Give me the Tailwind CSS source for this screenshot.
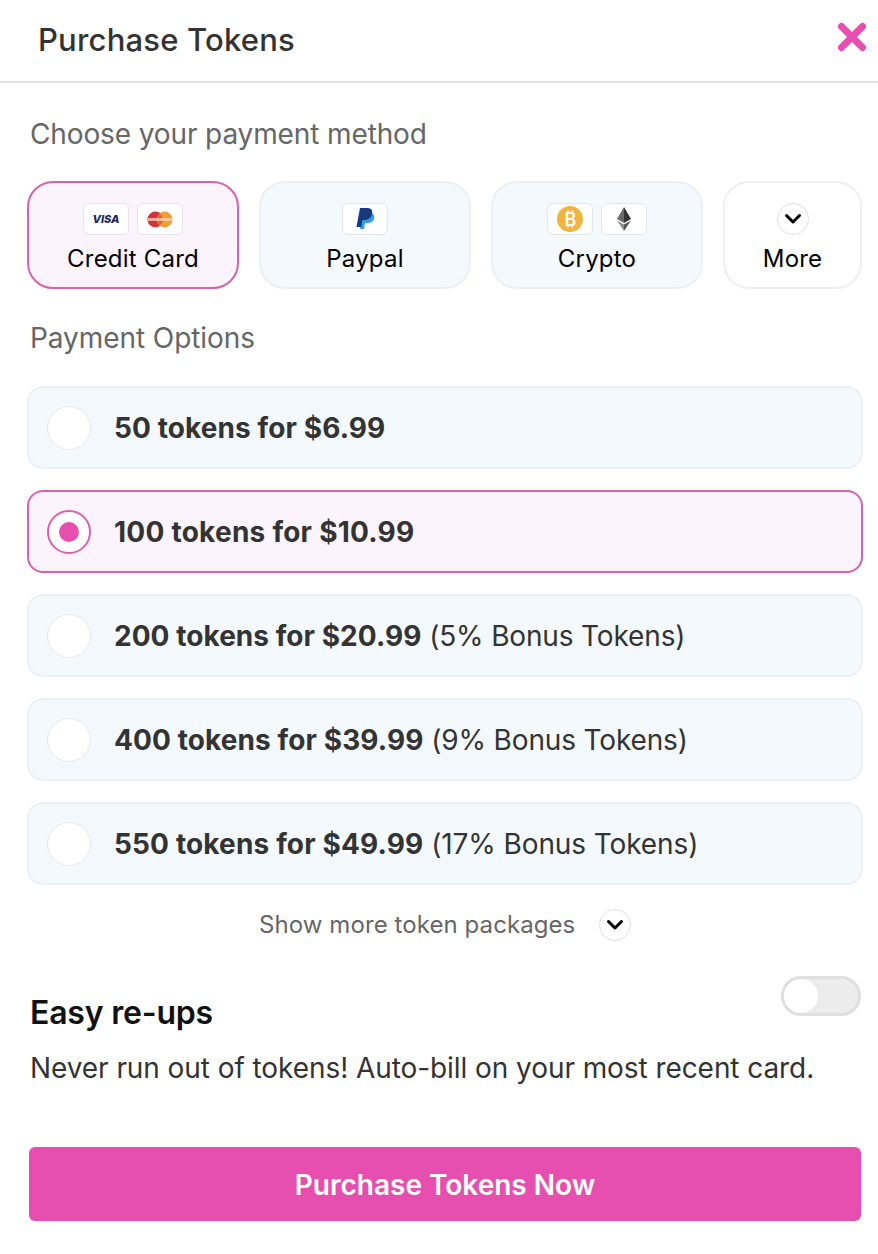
<!DOCTYPE html>
<html>
  <head>
    <meta charset="UTF-8" />
    <meta name="viewport" content="width=device-width, initial-scale=1.0" />
    <title>Purchase Tokens</title>
    <script src="https://cdn.jsdelivr.net/npm/@tailwindcss/browser@4"></script>
  </head>
  <body class="bg-white font-['Inter',sans-serif]">
    <div class="w-[878px] h-[1254px] overflow-hidden">
      <!-- header -->
      <div class="flex items-center justify-between h-[83px] border-b-2 border-[#e2e2e2] pl-[38px] pr-[11px]">
        <h1 class="text-[31px] font-medium text-[#333333] tracking-[0.2px]">Purchase Tokens</h1>
        <svg class="w-[30px] h-[30px] mb-[7px]" viewBox="0 0 30 30">
          <path d="M4.5 4.5 L25.5 25.5 M25.5 4.5 L4.5 25.5" stroke="#e64fb0" stroke-width="7" stroke-linecap="round" fill="none" />
        </svg>
      </div>

      <div class="pl-[27px] pr-[15px]">
        <p class="mt-[34px] text-[28px] leading-[34px] text-[#666666] pl-[3px] tracking-[-0.12px]">Choose your payment method</p>

        <!-- payment methods -->
        <div class="flex gap-[20px] mt-[30px]">
          <div class="flex flex-col items-center w-[212px] h-[108px] rounded-[26px] border-2 border-[#d862b0] bg-[#fbf4fc] pt-[20px]">
            <div class="flex gap-[8px]">
              <div class="flex items-center justify-center w-[46px] h-[32px] rounded-[6px] border border-[#e6e6e6] bg-white">
                <span class="text-[11px] font-extrabold italic text-[#1d2560] leading-none">VISA</span>
              </div>
              <div class="flex items-center justify-center w-[46px] h-[32px] rounded-[6px] border border-[#e6e6e6] bg-white">
                <svg class="w-[26px] h-[17px]" viewBox="0 0 28 18">
                  <circle cx="9" cy="9" r="8.5" fill="#d0353b" />
                  <circle cx="19" cy="9" r="8.5" fill="#f0a032" />
                  <path d="M14 2.5 A8.5 8.5 0 0 1 14 15.5 A8.5 8.5 0 0 1 14 2.5 Z" fill="#e0662f" />
                  <rect x="1" y="7.5" width="26" height="3" fill="#f8dcc6" opacity="0.75" />
                </svg>
              </div>
            </div>
            <span class="mt-[8px] text-[24px] leading-[32px] text-black tracking-[0.2px]">Credit Card</span>
          </div>

          <div class="flex flex-col items-center w-[212px] h-[108px] rounded-[26px] border-2 border-[#edf0f3] bg-[#f3f9fd] pt-[20px]">
            <div class="flex items-center justify-center w-[46px] h-[32px] rounded-[6px] border border-[#e6e6e6] bg-white">
              <svg class="w-[20px] h-[24px]" viewBox="0 0 20 24">
                <path d="M8 6 H15 C19 6 20 9 19 12 C18 15 15 16 12 16 H10 L9 22 H5 Z" fill="#2f9fe0" />
                <path d="M5 1 H12 C16 1 18 3 17 7 C16 11 13 13 9 13 H7.5 L6.2 20 H1.5 Z" fill="#17377f" />
              </svg>
            </div>
            <span class="mt-[8px] text-[24px] leading-[32px] text-black tracking-[0.2px]">Paypal</span>
          </div>

          <div class="flex flex-col items-center w-[212px] h-[108px] rounded-[26px] border-2 border-[#edf0f3] bg-[#f3f9fd] pt-[20px]">
            <div class="flex gap-[8px]">
              <div class="flex items-center justify-center w-[46px] h-[32px] rounded-[6px] border border-[#e6e6e6] bg-white">
                <svg class="w-[26px] h-[26px]" viewBox="0 0 26 26">
                  <circle cx="13" cy="13" r="13" fill="#f0b440" />
                  <path d="M11 4.5 V7 M15 4.5 V7 M11 19 V21.5 M15 19 V21.5" stroke="#ffffff" stroke-width="1.4" />
                  <text x="13.5" y="19.5" text-anchor="middle" font-size="18" font-weight="600" fill="#ffffff">B</text>
                </svg>
              </div>
              <div class="flex items-center justify-center w-[46px] h-[32px] rounded-[6px] border border-[#e6e6e6] bg-white">
                <svg class="w-[16px] h-[26px]" viewBox="0 0 16 26">
                  <path d="M8 1 L1 13 L8 17 Z" fill="#6b6b6b" />
                  <path d="M8 1 L15 13 L8 17 Z" fill="#333333" />
                  <path d="M1 14.5 L8 25 V18.5 Z" fill="#8c8c8c" />
                  <path d="M15 14.5 L8 25 V18.5 Z" fill="#555555" />
                </svg>
              </div>
            </div>
            <span class="mt-[8px] text-[24px] leading-[32px] text-black tracking-[0.2px]">Crypto</span>
          </div>

          <div class="flex flex-col items-center w-[139px] h-[108px] rounded-[26px] border-2 border-[#edf0f3] bg-white pt-[20px]">
            <div class="flex items-center justify-center w-[32px] h-[32px] rounded-full border border-[#e0e0e0]">
              <svg class="w-[18px] h-[12px]" viewBox="0 0 18 12">
                <path d="M2.5 2.5 L9 9 L15.5 2.5" stroke="#000000" stroke-width="3" stroke-linecap="round" stroke-linejoin="round" fill="none" />
              </svg>
            </div>
            <span class="mt-[8px] text-[24px] leading-[32px] text-black tracking-[0.2px]">More</span>
          </div>
        </div>

        <p class="mt-[32px] text-[28px] leading-[34px] text-[#666666] pl-[3px] tracking-[-0.07px]">Payment Options</p>

        <!-- token packages -->
        <div class="flex flex-col gap-[21px] mt-[31px]">
          <div class="flex items-center w-[836px] h-[83px] rounded-[16px] border-2 border-[#edf0f3] bg-[#f3f9fd] pl-[18px]">
            <div class="w-[44px] h-[44px] rounded-full border border-[#e8e8e8] bg-white"></div>
            <p class="ml-[23px] text-[28px] text-[#333333] font-bold tracking-[0.1px]">50 tokens for $6.99</p>
          </div>
          <div class="flex items-center w-[836px] h-[83px] rounded-[16px] border-2 border-[#d862b0] bg-[#fbf4fc] pl-[18px]">
            <div class="flex items-center justify-center w-[44px] h-[44px] rounded-full border-2 border-[#d862b0] bg-white">
              <div class="w-[20px] h-[20px] rounded-full bg-[#e64fb0]"></div>
            </div>
            <p class="ml-[23px] text-[28px] text-[#333333] font-bold tracking-[0.25px]">100 tokens for $10.99</p>
          </div>
          <div class="flex items-center w-[836px] h-[83px] rounded-[16px] border-2 border-[#edf0f3] bg-[#f3f9fd] pl-[18px]">
            <div class="w-[44px] h-[44px] rounded-full border border-[#e8e8e8] bg-white"></div>
            <p class="ml-[23px] text-[28px] text-[#333333] tracking-[-0.15px]"><span class="font-bold tracking-[0.05px]">200 tokens for $20.99</span> (5% Bonus Tokens)</p>
          </div>
          <div class="flex items-center w-[836px] h-[83px] rounded-[16px] border-2 border-[#edf0f3] bg-[#f3f9fd] pl-[18px]">
            <div class="w-[44px] h-[44px] rounded-full border border-[#e8e8e8] bg-white"></div>
            <p class="ml-[23px] text-[28px] text-[#333333] tracking-[-0.15px]"><span class="font-bold tracking-[0.1px]">400 tokens for $39.99</span> (9% Bonus Tokens)</p>
          </div>
          <div class="flex items-center w-[836px] h-[83px] rounded-[16px] border-2 border-[#edf0f3] bg-[#f3f9fd] pl-[18px]">
            <div class="w-[44px] h-[44px] rounded-full border border-[#e8e8e8] bg-white"></div>
            <p class="ml-[23px] text-[28px] text-[#333333] tracking-[-0.1px]"><span class="font-bold tracking-[0.15px]">550 tokens for $49.99</span> (17% Bonus Tokens)</p>
          </div>
        </div>

        <div class="flex items-center mt-[24px] pl-[232px]">
          <span class="text-[24px] leading-[32px] text-[#666666] tracking-[0.08px]">Show more token packages</span>
          <div class="flex items-center justify-center w-[32px] h-[32px] ml-[24px] rounded-full border border-[#e0e0e0]">
            <svg class="w-[18px] h-[12px]" viewBox="0 0 18 12">
              <path d="M2.5 2.5 L9 9 L15.5 2.5" stroke="#000000" stroke-width="3" stroke-linecap="round" stroke-linejoin="round" fill="none" />
            </svg>
          </div>
        </div>

        <!-- re-ups -->
        <div class="flex justify-between mt-[35px] pl-[3px] pr-[2px]">
          <h2 class="mt-[17px] text-[32px] leading-[40px] font-semibold text-[#111111] tracking-[-0.2px]">Easy re-ups</h2>
          <div class="flex items-center w-[80px] h-[40px] rounded-full border-[3px] border-[#dfdfdf] bg-[#ececec]">
            <div class="w-[34px] h-[34px] rounded-full bg-white"></div>
          </div>
        </div>
        <p class="mt-[17px] pl-[3px] text-[28px] leading-[36px] text-[#333333] tracking-[-0.07px]">Never run out of tokens! Auto-bill on your most recent card.</p>

        <button type="button" class="block w-[832px] h-[74px] mt-[61px] ml-[2px] pt-[1px] rounded-[6px] bg-[#e64fb0] text-white text-[28px] font-semibold">
          Purchase Tokens Now
        </button>
      </div>
    </div>
  </body>
</html>
